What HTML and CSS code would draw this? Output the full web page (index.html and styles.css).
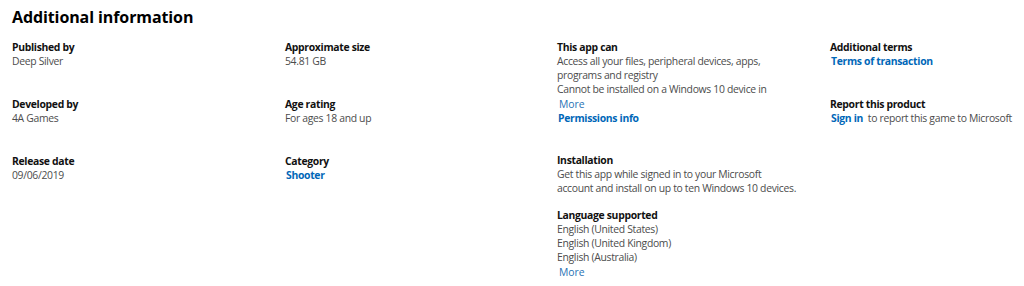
FILE: index.html
```html
<!DOCTYPE html>
<html lang="en">
<head>
  <meta charset="UTF-8" />
  <title>Additional information</title>
  <meta name="viewport" content="width=device-width, initial-scale=1.0" />
  <link rel="stylesheet" href="styles.css">
</head>
<body>
  <section class="additional">
    <h2>Additional information</h2>

    <div class="columns">
      <div class="col">
        <div class="item">
          <h4>Published by</h4>
          <p>Deep Silver</p>
        </div>
        <div class="item">
          <h4>Developed by</h4>
          <p>4A Games</p>
        </div>
        <div class="item">
          <h4>Release date</h4>
          <p>09/06/2019</p>
        </div>
      </div>

      <div class="col">
        <div class="item">
          <h4>Approximate size</h4>
          <p>54.81 GB</p>
        </div>
        <div class="item">
          <h4>Age rating</h4>
          <p>For ages 18 and up</p>
        </div>
        <div class="item">
          <h4>Category</h4>
          <a class="link" href="#">Shooter</a>
        </div>
      </div>

      <div class="col">
        <div class="item item-tall">
          <h4>This app can</h4>
          <p>Access all your files, peripheral devices, apps,<br>programs and registry<br>Cannot be installed on a Windows 10 device in</p>
          <button class="more">More</button>
          <a class="link" href="#">Permissions info</a>
        </div>
        <div class="item item-compact">
          <h4>Installation</h4>
          <p>Get this app while signed in to your Microsoft<br>account and install on up to ten Windows 10 devices.</p>
        </div>
        <div class="item">
          <h4>Language supported</h4>
          <p>English (United States)<br>English (United Kingdom)<br>English (Australia)</p>
          <button class="more">More</button>
        </div>
      </div>

      <div class="col">
        <div class="item">
          <h4>Additional terms</h4>
          <a class="link" href="#">Terms of transaction</a>
        </div>
        <div class="item">
          <h4>Report this product</h4>
          <p><a class="link" href="#">Sign in</a>&nbsp; to report this game to Microsoft</p>
        </div>
      </div>
    </div>
  </section>
</body>
</html>
```

FILE: styles.css
```css
body {
  margin: 0;
  font-family: "Open Sans", "Noto Sans", sans-serif;
  background-color: #fff;
  color: #000;
}

.additional {
  padding: 4px 12px 0;
}

h2 {
  margin: 0;
  font-size: 16px;
  line-height: 26px;
  font-weight: 700;
  letter-spacing: -0.1px;
  color: #000;
}

.columns {
  display: grid;
  grid-template-columns: 273px 272px 273px 200px;
  margin-top: 10px;
}

.col {
  display: flex;
  flex-direction: column;
}

.item {
  min-height: 44px;
  margin-bottom: 13px;
  font-size: 10.4px;
  line-height: 14px;
  letter-spacing: -0.32px;
}

.item-tall {
  margin-bottom: 28px;
}

.item-compact {
  margin-bottom: 11px;
}

h4 {
  margin: 0;
  font-size: 10.4px;
  font-weight: 700;
  color: #111;
}

p {
  margin: 0;
  color: #4c4c4c;
}

.link {
  display: inline-block;
  padding-left: 1px;
  color: #0067b8;
  font-weight: 700;
  text-decoration: none;
}

.more {
  display: block;
  padding: 1px 2px 0;
  border: none;
  background: none;
  font: inherit;
  color: #2a73b5;
  cursor: pointer;
  text-align: left;
}
```
